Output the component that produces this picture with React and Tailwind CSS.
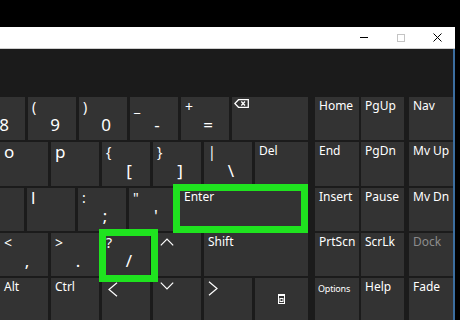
import React from 'react';

// key with shifted char top-left and main char bottom-centre
const SymKey = ({ top, main, w = 'w-[48px]' }) => (
  <div className={`${w} shrink-0 bg-[#333333] flex flex-col justify-between`}>
    <span className="pl-[4px] pt-[2px] text-[14px] leading-[16px] h-[18px]">{top}</span>
    <span className="pl-[6px] pb-[5px] text-center text-[17px] leading-[20px]">{main}</span>
  </div>
);

const LetterKey = ({ ch, w = 'w-[48px]' }) => (
  <div className={`${w} shrink-0 bg-[#333333] pl-[4px] text-[17px] leading-[20px]`}>{ch}</div>
);

const LabelKey = ({ label, w = 'w-[48px]', size = 'text-[12px] pl-[4px] pt-[1px]', className = '' }) => (
  <div className={`${w} shrink-0 bg-[#333333] leading-[16px] ${size} ${className}`}>
    {label}
  </div>
);

const Blank = ({ w = 'w-[48px]', children, className = '' }) => (
  <div className={`${w} shrink-0 bg-[#333333] ${className}`}>{children}</div>
);

// Home/PgUp/Nav block on the right
const NavKeys = ({ a, b, c, cClass = '' }) => (
  <div className="flex ml-[7px]">
    <LabelKey label={a} w="w-[44px]" />
    <LabelKey label={b} w="w-[43px]" className="ml-[2px]" />
    <LabelKey label={c} w="w-[44px]" className={`ml-[5px] ${cClass}`} />
  </div>
);

const Chevron = ({ points, w, h }) => (
  <svg width={w} height={h} viewBox={`0 0 ${w} ${h}`} fill="none" stroke="white" strokeWidth="1.2">
    <polyline points={points} />
  </svg>
);

export default function App() {
  return (
    <div className="w-[460px] h-[320px] bg-black overflow-hidden relative text-white font-['Noto_Sans','Open_Sans',sans-serif]">
      <div className="h-[27px]" />
      <div className="w-[455px]">
        {/* title bar */}
        <div className="h-[22px] bg-white border-b border-[#cfcfcf] flex justify-end items-center text-black">
          <div className="w-[36px] flex justify-center">
            <div className="w-[8px] h-[1px] bg-black" />
          </div>
          <div className="w-[37px] flex justify-center">
            <div className="w-[8px] h-[8px] border border-[#c4c4c4]" />
          </div>
          <div className="w-[36px] flex justify-center">
            <svg width="9" height="9" viewBox="0 0 9 9" stroke="black" strokeWidth="1">
              <path d="M0.5 0.5 L8.5 8.5 M8.5 0.5 L0.5 8.5" />
            </svg>
          </div>
        </div>

        {/* keyboard panel */}
        <div className="h-[271px] bg-[#1b1b1b] border-r-2 border-[#3c6e9f] pt-[48px] flex flex-col gap-[2px] overflow-hidden">
          {/* row 1 */}
          <div className="h-[43px] flex">
            <div className="w-[308px] shrink-0 flex">
              <div className="flex gap-[3px] -ml-[23px]">
                <SymKey top="" main="8" />
                <SymKey top="(" main="9" />
                <SymKey top=")" main="0" />
                <SymKey top="_" main="-" />
                <SymKey top="+" main="=" />
                <Blank w="w-[76px]" className="pl-[2px] pt-[2px]">
                  <svg width="15" height="9" viewBox="0 0 15 9" fill="none" stroke="white" strokeWidth="1.3">
                    <path d="M4.5 0.7 H14.3 V8.3 H4.5 L0.8 4.5 Z" />
                    <path d="M7.3 2.5 L11 6.5 M11 2.5 L7.3 6.5" />
                  </svg>
                </Blank>
              </div>
            </div>
            <NavKeys a="Home" b="PgUp" c="Nav" />
          </div>

          {/* row 2 */}
          <div className="h-[44px] flex">
            <div className="w-[308px] shrink-0 flex gap-[3px]">
              <LetterKey ch="o" />
              <LetterKey ch="p" />
              <SymKey top="{" main="[" />
              <SymKey top="}" main="]" />
              <SymKey top="|" main="\" />
              <LabelKey label="Del" w="w-[53px]" />
            </div>
            <NavKeys a="End" b="PgDn" c="Mv Up" />
          </div>

          {/* row 3 */}
          <div className="h-[43px] flex">
            <div className="w-[308px] shrink-0 flex">
              <div className="flex gap-[3px] -ml-[24px]">
                <Blank />
                <LetterKey ch="l" />
                <SymKey top=":" main=";" />
                <SymKey top={'"'} main="'" />
                <LabelKey label="Enter" w="w-[128px]" />
              </div>
            </div>
            <NavKeys a="Insert" b="Pause" c="Mv Dn" />
          </div>

          {/* row 4 */}
          <div className="h-[43px] flex">
            <div className="w-[308px] shrink-0 flex gap-[3px]">
              <SymKey top="<" main="," />
              <SymKey top=">" main="." />
              <SymKey top="?" main="/" />
              <Blank className="pl-[7px] pt-[5px]">
                <Chevron w={14} h={8} points="0.8,7.3 7,1 13.2,7.3" />
              </Blank>
              <LabelKey label="Shift" w="w-[104px]" />
            </div>
            <NavKeys a="PrtScn" b="ScrLk" c="Dock" cClass="text-[#8c8c8c]" />
          </div>

          {/* row 5 */}
          <div className="h-[43px] flex">
            <div className="w-[308px] shrink-0 flex gap-[3px]">
              <LabelKey label="Alt" />
              <LabelKey label="Ctrl" />
              <Blank className="pl-[6px] pt-[4px]">
                <Chevron w={10} h={15} points="9,0.8 1,7.5 9,14.2" />
              </Blank>
              <Blank className="pl-[7px] pt-[4px]">
                <Chevron w={14} h={8} points="0.8,0.7 7,7 13.2,0.7" />
              </Blank>
              <Blank className="pl-[4px] pt-[3px]">
                <Chevron w={10} h={15} points="1,0.8 9,7.5 1,14.2" />
              </Blank>
              <Blank w="w-[53px]" className="pl-[23px] pt-[16px]">
                <svg width="7" height="10" viewBox="0 0 7 10" fill="none" stroke="white" strokeWidth="1">
                  <rect x="0.5" y="0.5" width="6" height="9" />
                  <path d="M0.5 1.5 H6.5" />
                  <rect x="2" y="4.5" width="3" height="3" />
                </svg>
              </Blank>
            </div>
            <div className="flex ml-[7px]">
              <LabelKey label="Options" w="w-[44px]" size="text-[9px] pl-[3px] pt-[3px] tracking-[-0.2px]" />
              <LabelKey label="Help" w="w-[43px]" className="ml-[2px]" />
              <LabelKey label="Fade" w="w-[44px]" className="ml-[5px]" />
            </div>
          </div>
        </div>
      </div>

      {/* highlight boxes */}
      <div className="absolute left-[173px] top-[184px] w-[135px] h-[49px] border-[7px] border-[#1fe31f]" />
      <div className="absolute left-[99px] top-[229px] w-[59px] h-[53px] border-[7px] border-[#1fe31f]" />
    </div>
  );
}
